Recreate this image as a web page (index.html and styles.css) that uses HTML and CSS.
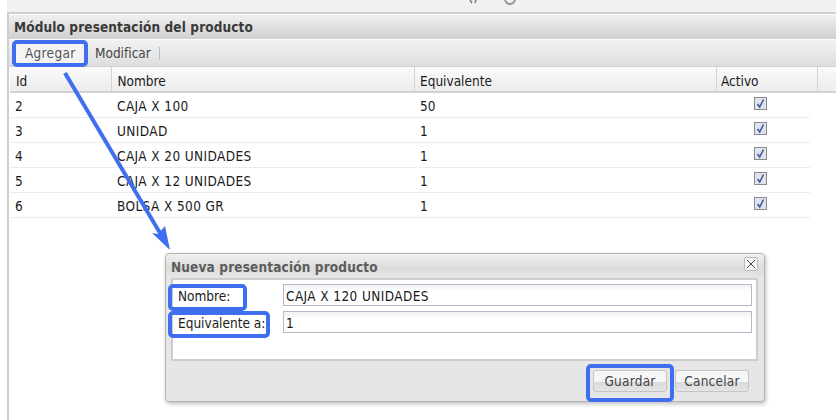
FILE: index.html
```html
<!DOCTYPE html>
<html lang="es">
<head>
<meta charset="utf-8">
<title>Módulo presentación del producto</title>
<link rel="stylesheet" href="styles.css">
</head>
<body>
<div class="topbar">
  <svg class="topicons" width="60" height="6" viewBox="0 0 60 6"><path d="M2 0l2 3M8 0L7 3" stroke="#777" stroke-width="1.5" fill="none"/><path d="M37 0c1 3 3 4 5 4s4-1 5-4" stroke="#999" stroke-width="2" fill="none"/></svg>
</div>
<main class="panel">
  <h1 class="title">Módulo presentación del producto</h1>
  <div class="toolbar">
    <span class="tool active">Agregar</span>
    <span class="tool">Modificar</span>
    <span class="sep"></span>
  </div>
  <div class="grid-head">
    <div class="hcell c1">Id</div>
    <div class="hcell c2">Nombre</div>
    <div class="hcell c3">Equivalente</div>
    <div class="hcell c4">Activo</div>
    <div class="hcell c5"></div>
  </div>
  <div class="rows">
    <div class="row"><div class="cell c1">2</div><div class="cell c2 caps">CAJA X 100</div><div class="cell c3">50</div><div class="cell c4b"><span class="check"><svg width="11" height="11" viewBox="0 0 11 11"><path d="M2.5 6l2.2 3L8.5 1.5" stroke="#46599c" stroke-width="1.6" fill="none"/></svg></span></div></div>
    <div class="row"><div class="cell c1">3</div><div class="cell c2 caps">UNIDAD</div><div class="cell c3">1</div><div class="cell c4b"><span class="check"><svg width="11" height="11" viewBox="0 0 11 11"><path d="M2.5 6l2.2 3L8.5 1.5" stroke="#46599c" stroke-width="1.6" fill="none"/></svg></span></div></div>
    <div class="row"><div class="cell c1">4</div><div class="cell c2 caps">CAJA X 20 UNIDADES</div><div class="cell c3">1</div><div class="cell c4b"><span class="check"><svg width="11" height="11" viewBox="0 0 11 11"><path d="M2.5 6l2.2 3L8.5 1.5" stroke="#46599c" stroke-width="1.6" fill="none"/></svg></span></div></div>
    <div class="row"><div class="cell c1">5</div><div class="cell c2 caps">CAJA X 12 UNIDADES</div><div class="cell c3">1</div><div class="cell c4b"><span class="check"><svg width="11" height="11" viewBox="0 0 11 11"><path d="M2.5 6l2.2 3L8.5 1.5" stroke="#46599c" stroke-width="1.6" fill="none"/></svg></span></div></div>
    <div class="row"><div class="cell c1">6</div><div class="cell c2 caps">BOLSA X 500 GR</div><div class="cell c3">1</div><div class="cell c4b"><span class="check"><svg width="11" height="11" viewBox="0 0 11 11"><path d="M2.5 6l2.2 3L8.5 1.5" stroke="#46599c" stroke-width="1.6" fill="none"/></svg></span></div></div>
  </div>
</main>
<section class="dialog">
  <header class="dlg-head">
    <span class="dlg-title">Nueva presentación producto</span>
    <span class="dlg-close"><svg width="10" height="10" viewBox="0 0 10 10"><path d="M1 1l8 8M9 1L1 9" stroke="#444" stroke-width="1" fill="none"/></svg></span>
  </header>
  <div class="dlg-body">
    <div class="field"><label class="flabel">Nombre:</label><div class="finput caps">CAJA X 120 UNIDADES</div></div>
    <div class="field"><label class="flabel">Equivalente a:</label><div class="finput">1</div></div>
  </div>
  <div class="dlg-foot">
    <span class="btn">Guardar</span>
    <span class="btn">Cancelar</span>
  </div>
</section>
<div class="mark m-agregar"></div>
<div class="mark m-nombre"></div>
<div class="mark m-equiv"></div>
<div class="mark m-guardar"></div>
<svg class="arrow" width="836" height="420" viewBox="0 0 836 420"><path d="M65 73L163 238" stroke="#406ef0" stroke-width="4" fill="none"/><path d="M170 250L165 226L158 234L152 233Z" fill="#406ef0"/></svg>
</body>
</html>
```
FILE: styles.css
```css
html, body { margin: 0; padding: 0; }
body {
  width: 836px; height: 420px; overflow: hidden; position: relative; background: #fff;
  font-family: "DejaVu Sans Condensed", "DejaVu Sans", sans-serif; font-size: 13.5px; color: #1a1a1a;
}
.caps { letter-spacing: .4px; }
.topbar { height: 12px; margin-left: 7px; background: #f1f1f1; border-bottom: 2px solid #cfcfcf; box-sizing: content-box; position: relative; overflow: hidden; }
.topicons { position: absolute; left: 461px; top: 0; }
.panel { margin-left: 7px; border-left: 2px solid #cfcfcf; height: 406px; box-sizing: border-box; background: #fff; }
.title {
  margin: 0; height: 25px; box-sizing: border-box; padding: 3px 0 0 5px; border-top: 1px solid #fff;
  font-size: 13.5px; line-height: 18px; font-weight: 700; color: #3a3a3a; letter-spacing: .12px;
  background: linear-gradient(#f0f0f0, #d0d0d0);
}
.toolbar {
  height: 28px; box-sizing: border-box; display: flex; align-items: center; border-top: 1px solid #fff; border-bottom: 1px solid #cfcfcf;
  background: linear-gradient(#f2f2f2, #dedede); color: #444;
}
.tool { line-height: 26px; padding-right: 8px; margin-left: 11px; }
.tool.active { width: 68px; margin-left: 7px; box-sizing: border-box; background: #f4f4f4; padding: 0 0 0 9px; color: #555; white-space: nowrap; letter-spacing: .3px; }
.sep { width: 1px; height: 13px; background: #bbb; }
.grid-head { display: flex; height: 26px; box-sizing: border-box; border-bottom: 2px solid #d2d2d2; background: linear-gradient(#fbfbfb, #ececec); margin-left: 1px; }
.hcell { line-height: 28px; padding-left: 5px; box-sizing: border-box; border-right: 1px solid #d4d4d4; }
.hcell.c1 { padding-left: 6px; }
.hcell.c2 { padding-left: 5.5px; }
.c1 { width: 102px; }
.c2 { width: 303px; }
.c3 { width: 302px; }
.hcell.c4 { width: 101px; padding-left: 4px; }
.c5 { flex: 1; border-right: 0; }
.rows { margin-left: 1px; width: 800px; }
.row { display: flex; height: 25px; box-sizing: border-box; border-bottom: 1px solid #ececec; }
.cell { line-height: 27px; padding-left: 5px; box-sizing: border-box; }
.c4b { flex: 1; display: flex; justify-content: center; padding-top: 4px; padding-left: 0; box-sizing: border-box; padding-right: 6px; }
.check { width: 13px; height: 13px; box-sizing: border-box; border: 1px solid #8a8a8a; background: #dfe3ee; display: flex; align-items: center; justify-content: center; }
.dialog {
  position: absolute; left: 165px; top: 253px; width: 600px; height: 149px; box-sizing: border-box;
  background: #e6e6e6; border: 1px solid #b4b4b4; border-radius: 4px; box-shadow: 1px 2px 4px rgba(0,0,0,.25);
  display: flex; flex-direction: column; padding: 0 6px 0 5px;
}
.dlg-head { height: 24px; margin: 0 -6px 0 -5px; padding: 3px 6px 0 5px; box-sizing: border-box; display: flex; justify-content: space-between; background: linear-gradient(#f0f0f0, #dcdcdc 60%, #e6e6e6); border-radius: 4px 4px 0 0; }
.dlg-title { font-size: 13.5px; font-weight: 700; color: #5c5c5c; line-height: 20px; letter-spacing: .15px; }
.dlg-close { width: 14px; height: 14px; box-sizing: border-box; border: 1px solid #bbb; border-radius: 2px; background: #f4f4f4; display: flex; align-items: center; justify-content: center; }
.dlg-body { height: 83px; box-sizing: border-box; border: 2px solid #cdcdcd; background: #fff; padding: 4px 4px 0 0; display: flex; flex-direction: column; gap: 5px; }
.field { display: flex; height: 22px; }
.flabel { width: 105px; padding-left: 5px; line-height: 24px; flex: none; box-sizing: content-box; }
.finput { flex: 1; border: 1px solid #b4b8c8; line-height: 23px; padding-left: 2px; box-sizing: border-box; background: linear-gradient(#f0f2f4, #fff 35%); }
.dlg-foot { display: flex; justify-content: flex-end; gap: 8px; padding: 9px 9px 0 0; }
.btn { width: 74px; height: 22px; box-sizing: border-box; border: 1px solid #c4c4c4; border-radius: 3px; text-align: center; line-height: 20px; color: #444; letter-spacing: .25px; background: linear-gradient(#f6f6f6 55%, #dadada 55%, #e4e4e4); }
.mark { position: absolute; box-sizing: border-box; border: 4px solid #406ef0; border-radius: 5px; }
.m-agregar { left: 12px; top: 40px; width: 76px; height: 27px; }
.m-nombre { left: 168px; top: 284px; width: 79px; height: 27px; }
.m-equiv { left: 168px; top: 311px; width: 102px; height: 27px; }
.m-guardar { left: 586px; top: 364px; width: 88px; height: 38px; }
.arrow { position: absolute; left: 0; top: 0; pointer-events: none; }
```
